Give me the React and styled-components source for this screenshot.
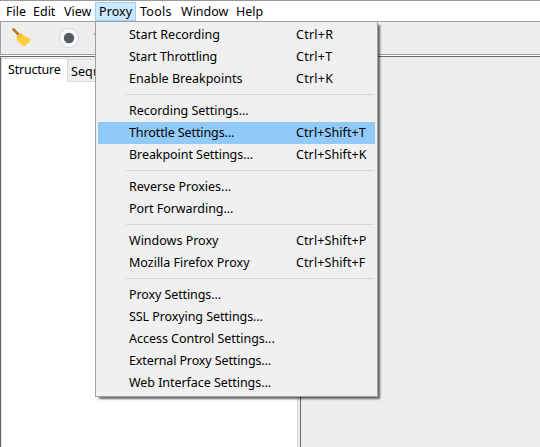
import React from "react";
import styled, { createGlobalStyle } from "styled-components";

const GlobalStyle = createGlobalStyle`
  * { box-sizing: border-box; }
  body { margin: 0; overflow: hidden; background: #eee; }
`;

const Window = styled.div`
  position: relative;
  display: flex;
  flex-direction: column;
  width: 540px;
  height: 447px;
  border-top: 1px solid #999;
  background: #eee;
  color: #000;
  font: 12.5px/22px "Noto Sans", "Open Sans", sans-serif;
  white-space: pre;
`;

const MenuBar = styled.nav`
  display: flex;
  height: 21px;
  padding: 1px 0 0 2px;
  background: #fff;
  border-bottom: 1px solid #a0a0a0;
  flex: none;
`;

const MenuTitle = styled.div`
  width: ${(p) => p.$w}px;
  height: 19px;
  line-height: 18px;
  padding-left: 3px;
  letter-spacing: ${(p) => p.$ls || 0}px;
  border: 1px solid ${(p) => (p.$open ? "#99d1ff" : "transparent")};
  background: ${(p) => (p.$open ? "#cce8ff" : "transparent")};
`;

const Toolbar = styled.div`
  display: flex;
  align-items: center;
  height: 33px;
  padding-left: 10px;
  gap: 25px;
  border-left: 1px solid #a0a0a0;
  border-bottom: 1px solid #a0a0a0;
  flex: none;
`;

const Workspace = styled.div`
  display: flex;
  flex: 1;
  border-left: 1px solid #696969;
  border-top: 1px solid #696969;
  margin-top: 1px;
  box-shadow: 0 -1px #fff;
`;

const LeftPane = styled.section`
  display: flex;
  flex-direction: column;
  width: 297px;
  border-right: 1px solid #d4d4d4;
`;

const Tabs = styled.div`
  display: flex;
  align-items: flex-end;
  height: 25px;
  padding: 1px 0 0 0;
`;

const Tab = styled.div`
  height: ${(p) => (p.$active ? 24 : 23)}px;
  width: ${(p) => (p.$active ? 67 : 72)}px;
  padding-left: ${(p) => (p.$active ? 6 : 3)}px;
  line-height: ${(p) => (p.$active ? 21 : 24)}px;
  letter-spacing: ${(p) => p.$ls || 0}px;
  background: ${(p) => (p.$active ? "#fff" : "#f0f0f0")};
  border: 1px solid #d9d9d9;
  border-bottom-color: ${(p) => (p.$active ? "#fff" : "#d9d9d9")};
  border-left-width: ${(p) => (p.$active ? 1 : 0)}px;
`;

const Tree = styled.div`
  flex: 1;
  border-left: 1px solid #e3e3e3;
  background: #fff;
`;

const RightPane = styled.section`
  flex: 1;
  margin-left: 2px;
  border-left: 1px solid #696969;
`;

const Popup = styled.div`
  position: absolute;
  left: 95px;
  top: 20px;
  width: 283px;
  height: 376px;
  padding: 2px;
  border: 1px solid #a0a0a0;
  background: #f0f0f0;
  box-shadow: 3px 3px 2px -1px rgba(0, 0, 0, 0.6);
`;

const Item = styled.div`
  display: flex;
  height: 22px;
  padding-left: 31px;
  background: ${(p) => (p.$selected ? "#91c9f7" : "transparent")};
`;

const Label = styled.span`
  width: 167px;
  letter-spacing: ${(p) => p.$ls || 0}px;
`;

const Shortcut = styled.span`
  letter-spacing: ${(p) => (p.$long ? 0.1 : 0.25)}px;
`;

const Separator = styled.div`
  height: 1px;
  margin: 4px 1px 5px 28px;
  background: #d7d7d7;
`;

const groups = [
  [["Start Recording", "Ctrl+R"], ["Start Throttling", "Ctrl+T", -0.07], ["Enable Breakpoints", "Ctrl+K"]],
  [["Recording Settings...", null, -0.04], ["Throttle Settings...", "Ctrl+Shift+T", -0.1], ["Breakpoint Settings...", "Ctrl+Shift+K", -0.06]],
  [["Reverse Proxies..."], ["Port Forwarding...", null, -0.06]],
  [["Windows Proxy", "Ctrl+Shift+P"], ["Mozilla Firefox Proxy", "Ctrl+Shift+F"]],
  [
    ["Proxy Settings...", null, -0.1],
    ["SSL Proxying Settings...", null, -0.08],
    ["Access Control Settings...", null, -0.03],
    ["External Proxy Settings...", null, -0.12],
    ["Web Interface Settings...", null, -0.05],
  ],
];

const menus = [["File", 27], ["Edit", 31], ["View", 35], ["Proxy", 41, 0.1], ["Tools", 41, 0.25], ["Window", 55], ["Help", 36]];

const Broom = () => (
  <svg width="22" height="22" viewBox="0 0 22 22">
    <path d="M2.5 2.5 L8.5 8.5" stroke="#b87832" strokeWidth="2.6" strokeLinecap="round" />
    <path d="M9.5 6 L12.5 8.5 L20 12 L18.5 15 L16 17 L13.5 19.5 L9.5 17 L6 13.5 L5.5 10 Z" fill="#fbd03b" />
    <path d="M9.5 6 L12.5 8.5 L8 12.5 L5.5 10 Z" fill="#f6c534" />
    <path d="M10 13 L14 17 M12 11 L17 15" stroke="#efb92a" strokeWidth="0.6" />
  </svg>
);

const Record = () => (
  <svg width="22" height="22" viewBox="0 0 22 22">
    <circle cx="11" cy="11" r="9.6" fill="#f7f8fa" stroke="#d3d6da" />
    <circle cx="11" cy="11" r="5.2" fill="#575b61" />
  </svg>
);

const ThrottleIcon = styled.svg`
  margin-left: -12px;
`;

const Throttle = () => (
  <ThrottleIcon width="22" height="22" viewBox="0 0 22 22">
    <path d="M0.5 7 Q1 5 4 6 L8 9 V12 H4 L2 8.5 Z" fill="#a5a9b2" />
  </ThrottleIcon>
);

export default function App() {
  return (
    <Window>
      <GlobalStyle />
      <MenuBar>
        {menus.map(([name, w, ls]) => (
          <MenuTitle key={name} $w={w} $ls={ls} $open={name === "Proxy"}>{name}</MenuTitle>
        ))}
      </MenuBar>
      <Toolbar><Broom /><Record /><Throttle /></Toolbar>
      <Workspace>
        <LeftPane>
          <Tabs><Tab $active $ls={-0.2}>Structure</Tab><Tab $ls={0.1}>Sequence</Tab></Tabs>
          <Tree />
        </LeftPane>
        <RightPane />
      </Workspace>
      <Popup>
        {groups.map((items, i) => (
          <React.Fragment key={i}>
            {i > 0 && <Separator />}
            {items.map(([name, keys, ls]) => (
              <Item key={name} $selected={name === "Throttle Settings..."}>
                <Label $ls={ls}>{name}</Label>
                {keys && <Shortcut $long={keys.length > 6}>{keys}</Shortcut>}
              </Item>
            ))}
          </React.Fragment>
        ))}
      </Popup>
    </Window>
  );
}
